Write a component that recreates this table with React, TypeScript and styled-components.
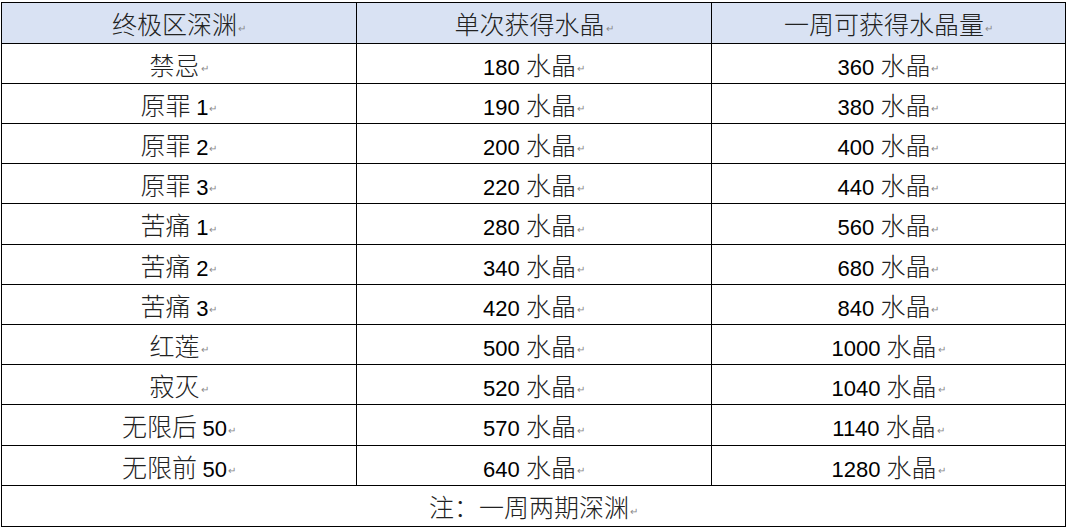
import React from "react";
import styled, { createGlobalStyle } from "styled-components";

const GlobalStyle = createGlobalStyle`
  body {
    margin: 0;
    background: #fff;
  }
`;

const Page = styled.div`
  padding: 2px 0 0 1px;
`;

const Grid = styled.div`
  display: grid;
  grid-template-columns: 354px 354px 353px;
  grid-template-rows: 40px repeat(4, 39px) 40px repeat(4, 39px) 40px 39px 40px;
  gap: 1px;
  padding: 1px;
  width: 1065px;
  box-sizing: border-box;
  background: #000;
`;

const Cell = styled.div<{ $head?: boolean; $span?: number }>`
  display: flex;
  align-items: center;
  justify-content: center;
  background: ${(p) => (p.$head ? "#d9e2f3" : "#fff")};
  grid-column: ${(p) => (p.$span ? `span ${p.$span}` : "auto")};
  font-family: "Noto Sans CJK SC", sans-serif;
  font-weight: 300;
  font-size: 25px;
  color: #222;
  white-space: pre;
`;

const Num = styled.span`
  font-family: "Liberation Sans", Arial, sans-serif;
  font-weight: 400;
  font-size: 22px;
  color: #000;
`;

const Mark = styled.span`
  font-family: "DejaVu Sans", sans-serif;
  font-size: 10px;
  color: #8a8a8a;
  align-self: flex-end;
  margin: 0 0 9px 1px;
`;

const rows: [string, string, string][] = [
  ["禁忌", "180 水晶", "360 水晶"],
  ["原罪 1", "190 水晶", "380 水晶"],
  ["原罪 2", "200 水晶", "400 水晶"],
  ["原罪 3", "220 水晶", "440 水晶"],
  ["苦痛 1", "280 水晶", "560 水晶"],
  ["苦痛 2", "340 水晶", "680 水晶"],
  ["苦痛 3", "420 水晶", "840 水晶"],
  ["红莲", "500 水晶", "1000 水晶"],
  ["寂灭", "520 水晶", "1040 水晶"],
  ["无限后 50", "570 水晶", "1140 水晶"],
  ["无限前 50", "640 水晶", "1280 水晶"],
];

// digits get the latin font, the rest stays CJK
function Text({ value }: { value: string }) {
  const parts = value.split(/(\d+ ?)/).filter(Boolean);
  return (
    <span>
      {parts.map((p, i) =>
        /\d/.test(p) ? <Num key={i}>{p}</Num> : <span key={i}>{p}</span>
      )}
    </span>
  );
}

function TableCell({ value, head, span }: { value: string; head?: boolean; span?: number }) {
  return (
    <Cell $head={head} $span={span}>
      <Text value={value} />
      <Mark>↵</Mark>
    </Cell>
  );
}

export default function App() {
  return (
    <>
      <GlobalStyle />
      <Page>
        <Grid>
          <TableCell head value="终极区深渊" />
          <TableCell head value="单次获得水晶" />
          <TableCell head value="一周可获得水晶量" />
          {rows.map((r) =>
            r.map((v, i) => <TableCell key={r[0] + i} value={v} />)
          )}
          <TableCell span={3} value="注：一周两期深渊" />
        </Grid>
      </Page>
    </>
  );
}
